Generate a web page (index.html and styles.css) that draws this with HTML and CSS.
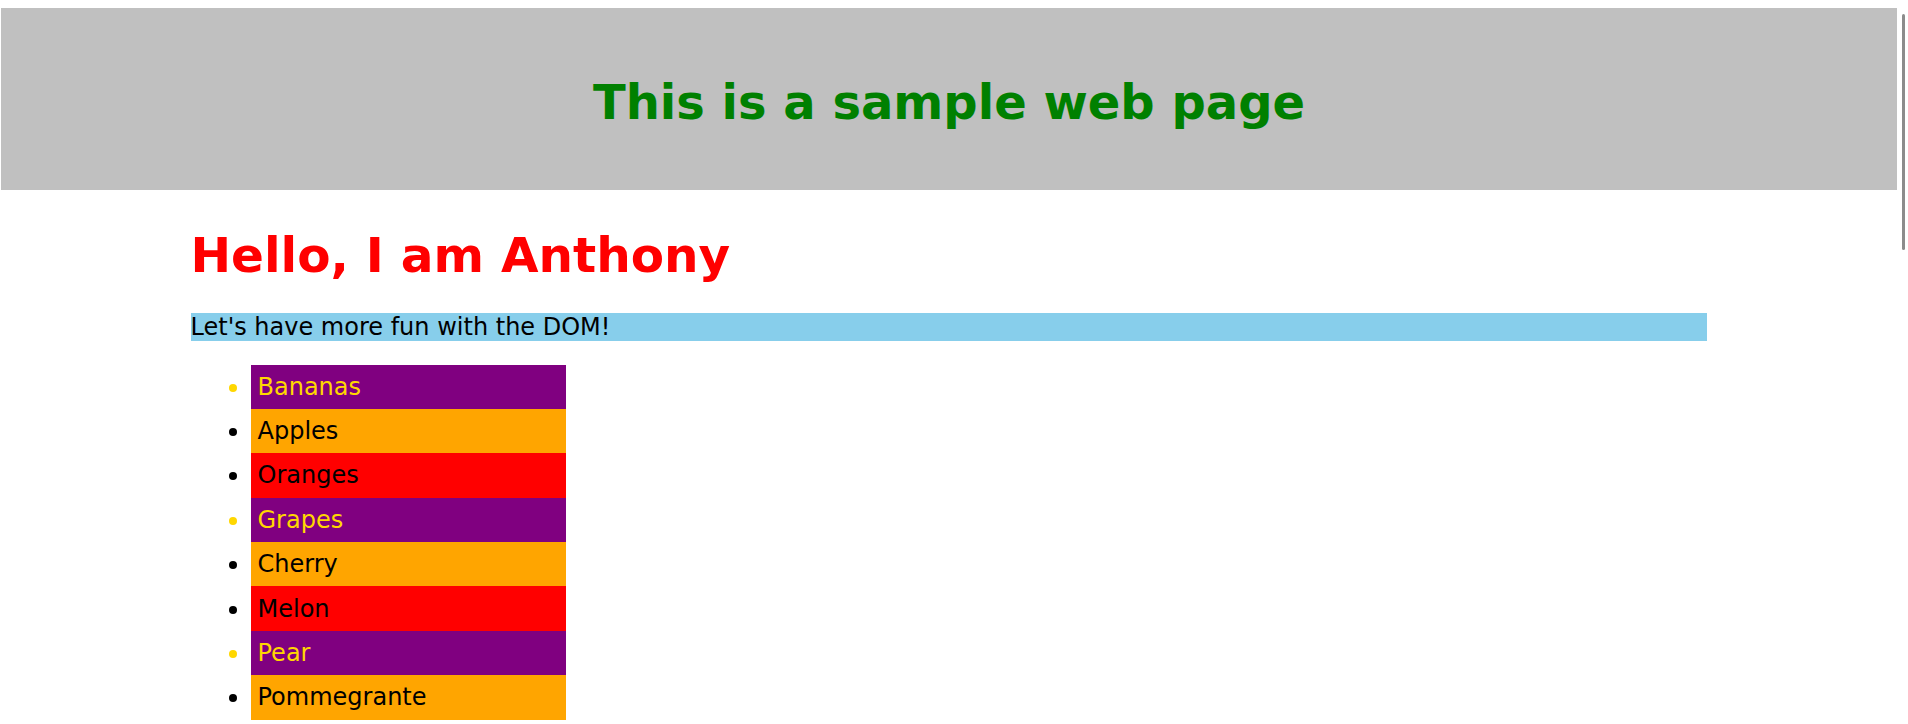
FILE: index.html
```html
<!DOCTYPE html>
<html lang="en">
<head>
<meta charset="utf-8">
<title>Sample web page</title>
<link rel="stylesheet" href="styles.css">
</head>
<body>
<div class="page">
  <header class="banner">
    <h1 class="banner-title">This is a sample web page</h1>
  </header>
  <main class="content">
    <h1 class="greeting">Hello, I am Anthony</h1>
    <p class="intro">Let's have more fun with the DOM!</p>
    <ul class="fruits">
      <li class="fruit purple">Bananas</li>
      <li class="fruit orange">Apples</li>
      <li class="fruit red">Oranges</li>
      <li class="fruit purple">Grapes</li>
      <li class="fruit orange">Cherry</li>
      <li class="fruit red">Melon</li>
      <li class="fruit purple">Pear</li>
      <li class="fruit orange">Pommegrante</li>
    </ul>
  </main>
</div>
<div class="scroll-thumb"></div>
</body>
</html>
```

FILE: styles.css
```css
html {
  overflow: hidden;
}

body {
  margin: 0;
  font-family: "DejaVu Sans", Verdana, sans-serif;
  font-size: 24px;
  color: #000;
  background: #fff;
}

.page {
  width: 1897px;
}

.banner {
  margin: 8px 0 0 1px;
  padding: 66px 0 60px;
  background: #c0c0c0;
  text-align: center;
}

.banner-title {
  margin: 0;
  font-size: 48px;
  font-weight: bold;
  color: #008000;
}

.content {
  width: 1516px;
  margin: 0 auto;
}

.greeting {
  margin: 37px 0 29.5px;
  font-size: 48.5px;
  font-weight: bold;
  color: #ff0000;
}

.intro {
  margin: 0 0 24px;
  background: #87ceeb;
}

.fruits {
  margin: 0;
  padding-left: 60px;
  width: 315px;
  list-style: none;
}

.fruit {
  position: relative;
  padding: 8.2px 7px;
}

.fruit::before {
  content: "";
  position: absolute;
  left: -21.5px;
  top: calc(50% - 3px);
  width: 8px;
  height: 8px;
  border-radius: 50%;
  background: currentColor;
}

.purple {
  background: #800080;
  color: #ffd700;
}

.orange {
  background: #ffa500;
}

.red {
  background: #ff0000;
}

.scroll-thumb {
  position: fixed;
  top: 14px;
  right: 3px;
  width: 3px;
  height: 236px;
  border-radius: 2px;
  background: #8c8c8c;
}
```
